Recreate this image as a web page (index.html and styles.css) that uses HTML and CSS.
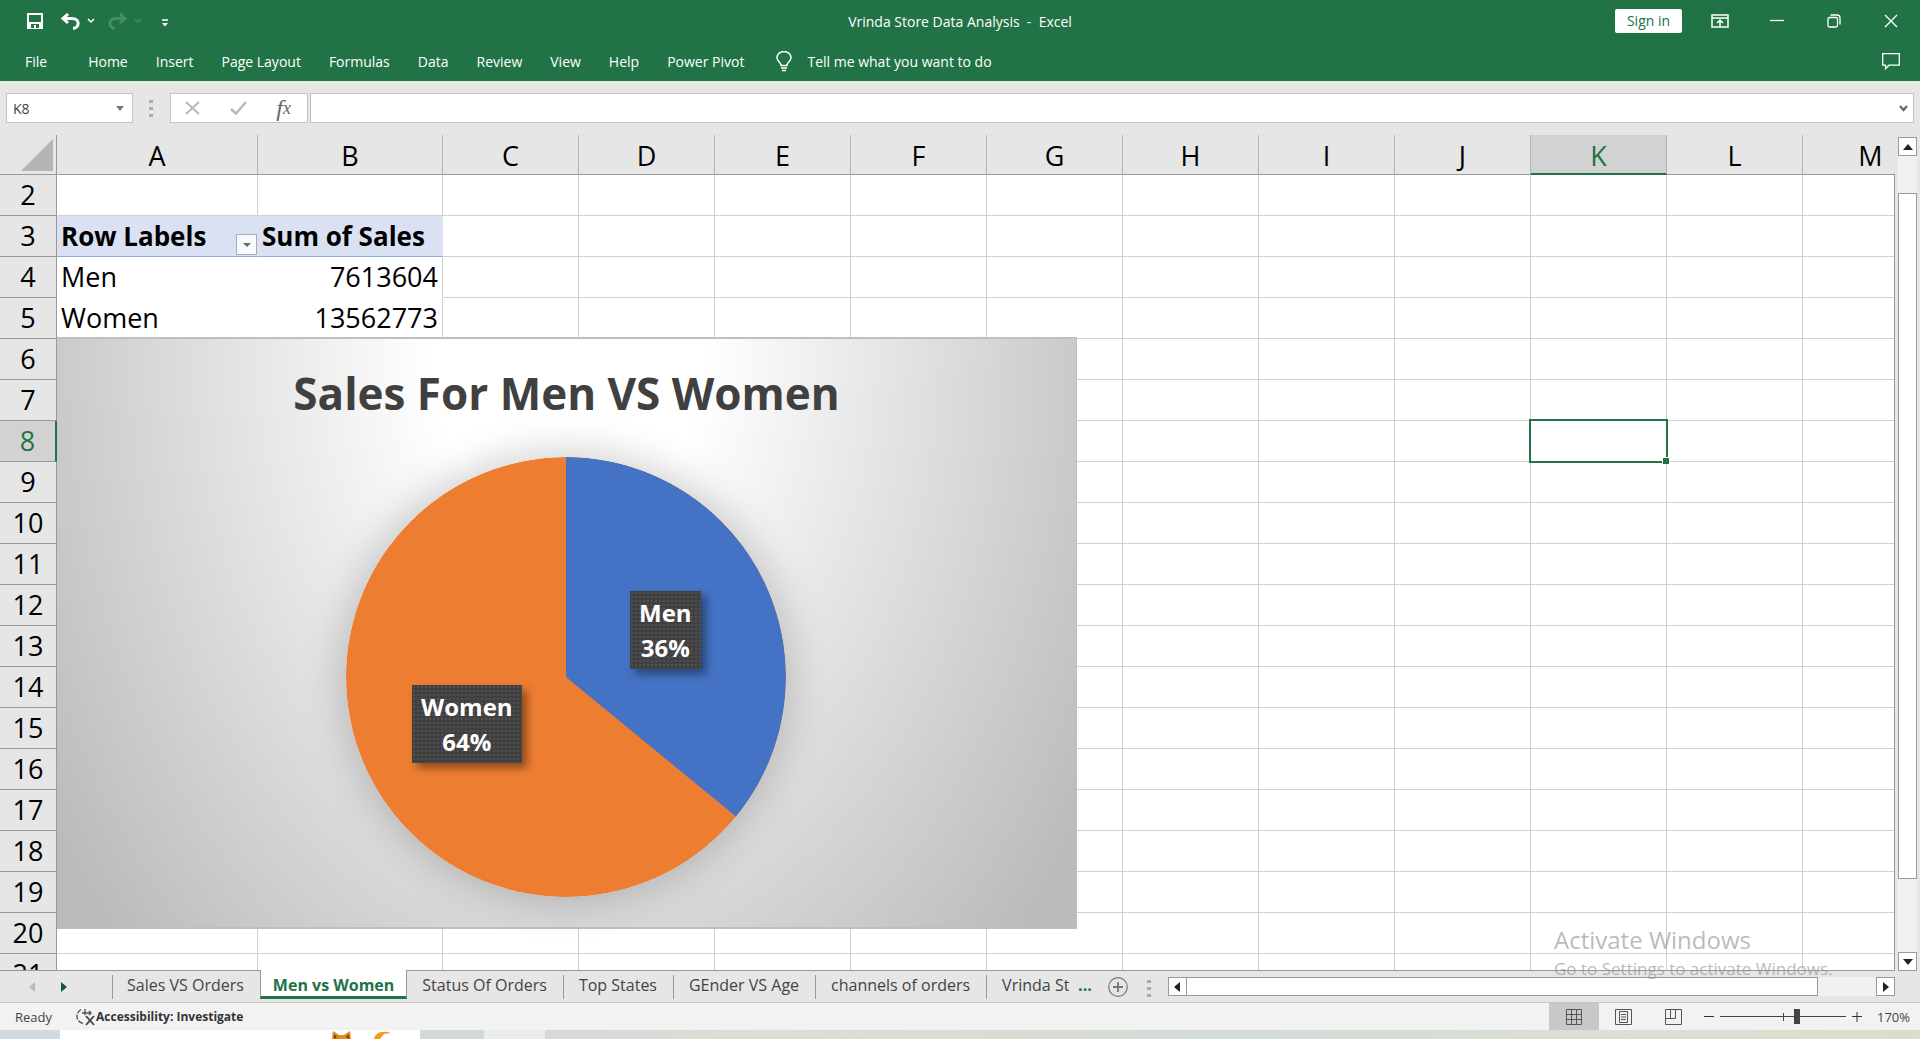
FILE: index.html
```html
<!DOCTYPE html>
<html lang="en">
<head>
<meta charset="utf-8">
<title>Vrinda Store Data Analysis - Excel</title>
<link rel="stylesheet" href="styles.css">
</head>
<body>
<div class="app">
  <header class="titlebar">
    <div class="quick">
      <button class="icon-btn" aria-label="Save"><svg width="16" height="16" viewBox="0 0 16 16"><path d="M1 1h14v14H1z" fill="none" stroke="#fff" stroke-width="2"/><path d="M1 9h14v6H1z" fill="#fff"/><path d="M4 11h8v4H9v-3H7v3H4z" fill="#217346"/></svg></button>
      <button class="icon-btn undo" aria-label="Undo"><svg width="19" height="17" viewBox="0 0 19 17"><path d="M7 1 2 5.500l5 4.500M2.500 5.500H11c8 0 8 9 1 10" fill="none" stroke="#fff" stroke-width="3"/></svg></button>
      <button class="icon-btn chev" aria-label="Undo list"><svg width="8" height="6" viewBox="0 0 8 6"><path d="m1 1 3 3 3-3" fill="none" stroke="#fff" stroke-width="1.500"/></svg></button>
      <button class="icon-btn redo" aria-label="Redo" disabled><svg width="19" height="17" viewBox="0 0 19 17"><path d="m12 1 5 4.500-5 4.500M16.500 5.500H8c-8 0-8 9-1 10" fill="none" stroke="#439064" stroke-width="3"/></svg></button>
      <button class="icon-btn chev" aria-label="Redo list" disabled><svg width="8" height="6" viewBox="0 0 8 6"><path d="m1 1 3 3 3-3" fill="none" stroke="#439064" stroke-width="1.500"/></svg></button>
      <button class="icon-btn more" aria-label="Customize toolbar"><svg width="6" height="8" viewBox="0 0 6 8"><path d="M0 1h6" stroke="#fff" stroke-width="1.500"/><path d="M0 4h6L3 7.500z" fill="#fff"/></svg></button>
    </div>
    <h1 class="doc-title">Vrinda Store Data Analysis&nbsp; -&nbsp; Excel</h1>
    <div class="window-tools">
      <button class="sign-in">Sign in</button>
      <button class="win-btn" aria-label="Ribbon display options"><svg width="18" height="14" viewBox="0 0 18 14"><path d="M1 1h16v12H1zM1 4h16" fill="none" stroke="#fff" stroke-width="1.500"/><path d="M9 12V6.500M6 9l3-3 3 3" fill="none" stroke="#fff" stroke-width="1.500"/></svg></button>
      <button class="win-btn" aria-label="Minimize"><svg width="14" height="14" viewBox="0 0 14 14"><path d="M0 6.500h14" stroke="#fff" stroke-width="1.300"/></svg></button>
      <button class="win-btn" aria-label="Restore"><svg width="14" height="14" viewBox="0 0 14 14"><rect x="1" y="3.500" width="9.500" height="9.500" rx="1.500" fill="none" stroke="#fff" stroke-width="1.300"/><path d="M3.500 1H10a3 3 0 0 1 3 3v6.500" fill="none" stroke="#fff" stroke-width="1.300"/></svg></button>
      <button class="win-btn" aria-label="Close"><svg width="14" height="14" viewBox="0 0 14 14"><path d="m1 1 12 12M13 1 1 13" stroke="#fff" stroke-width="1.400"/></svg></button>
    </div>
  </header>

  <nav class="ribbon" aria-label="Ribbon">
    <a class="file" href="#">File</a><a href="#">Home</a><a href="#">Insert</a><a href="#">Page Layout</a><a href="#">Formulas</a><a href="#">Data</a><a href="#">Review</a><a href="#">View</a><a href="#">Help</a><a href="#">Power Pivot</a>
    <a class="tell" href="#"><svg width="16" height="21" viewBox="0 0 16 21"><path d="M5 14.500c0-3-4-4-4-8a7 6 0 0 1 14 0c0 4-4 5-4 8zM5 17h6M6 19.500h4" fill="none" stroke="#fff" stroke-width="1.500"/></svg>Tell me what you want to do</a>
    <button class="icon-btn comments" aria-label="Comments"><svg width="18" height="17" viewBox="0 0 18 17"><path d="M.7.700h16.600v11.500H7L3.500 15.800v-3.600H.7z" fill="none" stroke="#fff" stroke-width="1.300"/></svg></button>
  </nav>

  <div class="formula-row">
    <div class="name-box"><input type="text" value="K8" aria-label="Name box"><svg width="8" height="5" viewBox="0 0 8 5"><path d="M0 0h8L4 5z" fill="#777"/></svg></div>
    <span class="grip"></span>
    <div class="fx-box">
      <button class="icon-btn" aria-label="Cancel"><svg width="15" height="14" viewBox="0 0 15 14"><path d="m1 1 13 12M14 1 1 13" stroke="#b9b9b9" stroke-width="2"/></svg></button>
      <button class="icon-btn" aria-label="Enter"><svg width="17" height="14" viewBox="0 0 17 14"><path d="m1 8 5 4.500L16 1" fill="none" stroke="#b9b9b9" stroke-width="2.600"/></svg></button>
      <button class="icon-btn fx" aria-label="Insert function">f<sub>x</sub></button>
    </div>
    <div class="formula"><input type="text" aria-label="Formula bar"><svg width="9" height="7" viewBox="0 0 9 7"><path d="m1 1 3.500 4L8 1" fill="none" stroke="#666" stroke-width="2.200"/></svg></div>
  </div>

  <main class="workspace">
    <div class="sheet">
      <table class="cells">
        <colgroup><col class="c-head"><col class="c-a"><col class="c-b"></colgroup>
        <thead><tr><th class="corner" aria-label="Select all"><svg width="32" height="32" viewBox="0 0 32 32"><path d="M32 0v32H0z" fill="#b4b4b4"/></svg></th></tr></thead>
        <tbody></tbody>
      </table>
      <figure class="chart">
        <figcaption>Sales For Men VS Women</figcaption>
        <svg class="pie" viewBox="0 0 440 440" role="img" aria-label="Men 36%, Women 64%">
          <circle cx="220" cy="220" r="220" fill="#ed7d31"/>
          <path d="M220 220V0A220 220 0 0 1 390 359.600z" fill="#4472c4"/>
        </svg>
        <div class="tag men">Men<br>36%</div>
        <div class="tag women">Women<br>64%</div>
      </figure>
    </div>
    <div class="edge"></div>
    <div class="scroll vertical">
      <button aria-label="Scroll up"><svg width="10" height="6" viewBox="0 0 10 6"><path d="M0 6h10L5 0z"/></svg></button>
      <i class="before"></i><i class="thumb"></i><i class="after"></i>
      <button aria-label="Scroll down"><svg width="10" height="6" viewBox="0 0 10 6"><path d="M0 0h10L5 6z"/></svg></button>
    </div>
  </main>

  <footer class="sheet-tabs">
    <div class="tab-nav">
      <button class="icon-btn" aria-label="Previous sheet"><svg width="6" height="10" viewBox="0 0 6 10"><path d="M6 0v10L0 5z" fill="#bbb"/></svg></button>
      <button class="icon-btn" aria-label="Next sheet"><svg width="6" height="10" viewBox="0 0 6 10"><path d="M0 0v10l6-5z" fill="#0e5c2f"/></svg></button>
    </div>
    <a href="#" class="first">Sales VS Orders</a><a href="#" class="active">Men vs Women</a><a href="#">Status Of Orders</a><a href="#">Top States</a><a href="#">GEnder VS Age</a><a href="#">channels of orders</a><a href="#" class="cut">Vrinda Store</a>
    <span class="dots">...</span>
    <button class="icon-btn add" aria-label="New sheet"><svg width="20" height="20" viewBox="0 0 20 20"><circle cx="10" cy="10" r="9.300" fill="none" stroke="#777" stroke-width="1.200"/><path d="M10 5v10M5 10h10" stroke="#777" stroke-width="1.800"/></svg></button>
    <span class="grip"></span>
    <div class="scroll horizontal">
      <button aria-label="Scroll left"><svg width="6" height="10" viewBox="0 0 6 10"><path d="M6 0v10L0 5z"/></svg></button>
      <i class="thumb"></i><i class="after"></i>
      <button aria-label="Scroll right"><svg width="6" height="10" viewBox="0 0 6 10"><path d="M0 0v10l6-5z"/></svg></button>
    </div>
  </footer>

  <div class="status">
    <span class="ready">Ready</span>
    <svg width="20" height="18" viewBox="0 0 20 18"><path d="M5 1.500a7.500 7.500 0 0 0 2 14" fill="none" stroke="#555" stroke-width="1.400" stroke-dasharray="5 1.500"/><path d="M9 1v6M6 5h9M13 3l2 2-2 2" fill="none" stroke="#555" stroke-width="1.400"/><path d="m10 8 8 9M18 8l-8 9" stroke="#444" stroke-width="1.800"/></svg>
    <strong>Accessibility: Investigate</strong>
    <div class="views">
      <button class="on" aria-label="Normal view"><svg width="16" height="16" viewBox="0 0 16 16"><path d="M.5.500h15v15H.5zM.5 5.500h15M.5 10.500h15M5.500.500v15M10.500.500v15" fill="none" stroke="#555"/></svg></button>
      <button aria-label="Page layout view"><svg width="17" height="16" viewBox="0 0 17 16"><path d="M.5.500h16v15H.5zM4.500 2.500h8v11h-8zM6 5.500h5M6 8h5M6 10.500h5" fill="none" stroke="#555"/></svg></button>
      <button aria-label="Page break view"><svg width="17" height="16" viewBox="0 0 17 16"><path d="M.5.500h16v15H.5zM.5 9.500h10v-9M5.500.500v9" fill="none" stroke="#555"/></svg></button>
    </div>
    <button class="icon-btn" aria-label="Zoom out"><svg width="10" height="10" viewBox="0 0 10 10"><path d="M0 4.500h10" stroke="#333"/></svg></button>
    <input class="zoom" type="range" min="10" max="400" value="250" aria-label="Zoom">
    <button class="icon-btn" aria-label="Zoom in"><svg width="10" height="10" viewBox="0 0 10 10"><path d="M0 4.500h10M5 0v10" stroke="#333"/></svg></button>
    <span class="percent">170%</span>
  </div>

  <div class="taskbar">
    <div class="search"><svg width="62" height="9" viewBox="0 0 62 9"><path d="M1 9 2 1l6 4h5l6-4 1 8z" fill="#e08a1c"/><path d="m3 4 3 3-3 2zM18 4l-3 3 3 2z" fill="#7a3c10"/><path d="M43 9c1-6 8-9 17-6l-7 1-4 5z" fill="#f0a020"/></svg></div>
    <div class="task-a"></div><div class="task-b"></div>
    <div class="wall"><span class="clock">3:58 PM</span></div>
  </div>

  <div class="watermark"><p class="wm-title">Activate Windows</p><p class="wm-text">Go to Settings to activate Windows.</p></div>
</div>
<script src="sheet.js"></script>
</body>
</html>
```
FILE: sheet.js
```js
const columns = "ABCDEFGHIJKLM".split("");
const values = {
  A3: "Row Labels", B3: "Sum of Sales",
  A4: "Men", B4: "7613604",
  A5: "Women", B5: "13562773"
};
const active = { column: "K", row: 8 };

const colgroup = document.querySelector(".cells colgroup");
columns.slice(2).forEach(() => colgroup.append(document.createElement("col")));

const headRow = document.querySelector(".cells thead tr");
columns.forEach(name => {
  const th = document.createElement("th");
  th.scope = "col";
  th.textContent = name;
  if (name === active.column) th.className = "current";
  headRow.append(th);
});

const body = document.querySelector(".cells tbody");
for (let row = 2; row <= 21; row++) {
  const tr = document.createElement("tr");
  const th = document.createElement("th");
  th.scope = "row";
  th.textContent = row;
  if (row === active.row) th.className = "current";
  tr.append(th);
  columns.forEach(name => {
    const td = document.createElement("td");
    const key = name + row;
    if (key in values) {
      td.textContent = values[key];
      td.className = row === 3 ? "pivot-head" : name === "B" ? "pivot number" : "pivot";
    }
    if (key === "A3") {
      const filter = document.createElement("button");
      filter.className = "filter";
      filter.setAttribute("aria-label", "Filter row labels");
      td.append(filter);
    }
    if (name === active.column && row === active.row) td.className = "selected";
    tr.append(td);
  });
  body.append(tr);
}
```
FILE: styles.css
```css
* { box-sizing: border-box; }
body { margin: 0; font-family: "Open Sans", "Noto Sans", sans-serif; font-size: 14px; color: #444; }
button, input { font: inherit; color: inherit; }
svg { display: block; flex: none; }
a { color: inherit; text-decoration: none; }

.app { position: relative; display: flex; flex-direction: column; height: 100vh; background: #e6e6e6; overflow: hidden; }
.icon-btn { display: flex; align-items: center; justify-content: center; padding: 0; border: 0; background: none; }

.titlebar { display: grid; grid-template-columns: 1fr auto 1fr; align-items: center; height: 42px; flex: none; background: #217346; color: #fff; }
.quick { display: flex; align-items: center; padding-left: 27px; }
.undo { margin-left: 18px; }
.chev { margin-left: 7px; }
.redo { margin-left: 13px; }
.more { margin: 4px 0 0 20px; }
.doc-title { margin: 0; font-size: 14px; font-weight: 400; }
.window-tools { display: flex; align-items: center; justify-content: flex-end; padding-right: 1px; }
.sign-in { width: 67px; height: 24px; margin-right: 9px; padding: 0; border: 0; border-radius: 2px; background: #fff; color: #217346; line-height: 20px; }
.win-btn { display: flex; align-items: center; justify-content: center; width: 57px; height: 38px; padding: 0; border: 0; background: none; }

.ribbon { display: flex; align-items: center; gap: 28px; height: 39px; flex: none; padding: 0 20px 0 25px; background: #217346; color: #fff; }
.ribbon .file { margin-right: 13px; }
.tell { display: flex; align-items: center; gap: 15px; margin-left: 4px; }
.comments { margin-left: auto; }

.formula-row { display: flex; align-items: center; height: 54px; flex: none; padding: 0 6px 4px; border-top: 4px solid #e2ebe2; }
.name-box, .fx-box, .formula { display: flex; align-items: center; height: 30px; border: 1px solid #c3c3c3; background: #fff; }
.name-box { width: 127px; padding-right: 8px; }
.name-box input { flex: 1; min-width: 0; padding: 0 6px; border: 0; background: none; }
.grip { width: 4px; height: 17px; margin: 0 17px 0 16px; background: repeating-linear-gradient(#aaa 0 3px, transparent 3px 7px); }
.fx-box { justify-content: space-between; width: 138px; padding: 0 16px 0 14px; }
.fx { font: italic 400 24px/24px "Liberation Serif", serif; color: #666; }
.fx sub { font-size: 18px; line-height: 12px; }
.formula { flex: 1; margin-left: 2px; padding-right: 5px; }
.formula input { flex: 1; border: 0; background: none; }

.workspace { display: flex; flex: 1; min-height: 0; }
.sheet { position: relative; flex: 1; min-width: 0; overflow: hidden; border-bottom: 1px solid #999; }
.cells { width: 1939px; table-layout: fixed; border-collapse: separate; border-spacing: 0; background: #fff; color: #000; font-size: 27px; line-height: 32px; }
.cells col { width: 136px; }
.cells .c-head { width: 57px; }
.cells .c-a { width: 201px; }
.cells .c-b { width: 185px; }
.cells th { padding: 0; border: 0 solid #999; border-width: 0 1px 1px 0; background: #e6e6e6; font-weight: 400; text-align: center; }
.cells thead th { height: 40px; padding-top: 3px; border-right-color: #b4b4b4; }
.cells thead th.corner { padding: 0 4px 3px 21px; border-right-color: #999; vertical-align: bottom; }
.cells thead th.current { border-bottom: 2px solid #217346; background: #d2d2d2; color: #217346; }
.cells tbody th.current { border-right: 2px solid #217346; background: #d2d2d2; color: #217346; }
.cells td { height: 41px; padding: 0 4px; border: 0 solid #d0d0d0; border-width: 0 1px 1px 0; white-space: nowrap; }
.cells .pivot-head { position: relative; border-color: #d9e1f2; border-bottom-color: #8ea9db; background: #d9e1f2; font-size: 26px; font-weight: 700; }
.cells .pivot { border-color: #fff; }
.cells .number { border-right-color: #d0d0d0; text-align: right; }
.cells .selected { position: relative; }
.selected::before { content: ""; position: absolute; inset: -2px; border: 2px solid #217346; }
.selected::after { content: ""; position: absolute; right: -3px; bottom: -3px; width: 6px; height: 6px; border: solid #fff; border-width: 1px 0 0 1px; background: #217346; }
.filter { position: absolute; right: 0; bottom: 1px; width: 21px; height: 21px; padding: 0; border: 1px solid #a5adbb; background: #f8fafd; }
.filter::after { content: ""; position: absolute; left: 6px; top: 8px; border: 4px solid transparent; border-top-color: #666; border-bottom: 0; }

.chart { position: absolute; left: 57px; top: 202px; width: 1020px; height: 592px; margin: 0; border: solid #bfbfbf; border-width: 2px 1px 2px 0; background: radial-gradient(ellipse 61% 150% at 50% 0, #fff 0, #fff 22%, #bababa 100%); font-weight: 700; text-align: center; }
.chart figcaption { padding-top: 26px; color: #404040; font-size: 44px; line-height: 56px; }
.pie { position: absolute; left: 289px; top: 118px; width: 440px; height: 440px; border-radius: 50%; box-shadow: 0 0 40px 4px rgba(0, 0, 0, .2); }
.tag { position: absolute; padding: 4px 9px; background: radial-gradient(#505050 1px, transparent 1px) 0 0 / 4px 4px #404040; color: #fff; font-size: 24px; line-height: 35px; box-shadow: 5px 5px 8px rgba(0, 0, 0, .4); }
.men { left: 573px; top: 252px; }
.women { left: 355px; top: 346px; }

.edge { width: 1px; margin-top: 39px; background: #999; }
.scroll { display: flex; background: #f1f1f1; }
.scroll button { display: flex; align-items: center; justify-content: center; width: 19px; height: 19px; flex: none; padding: 0; border: 1px solid #999; background: #fff; fill: #222; }
.vertical { flex-direction: column; width: 19px; margin: 2px 3px 0; }
.vertical .before { flex: 37; }
.vertical .thumb { flex: 688; border: 1px solid #999; background: #fff; }
.vertical .after { flex: 73; }

.sheet-tabs { display: flex; align-items: flex-start; height: 32px; flex: none; padding-right: 25px; border-bottom: 1px solid #c6c6c6; font-size: 16px; line-height: 20px; }
.tab-nav { display: flex; gap: 26px; width: 112px; padding: 11px 0 0 29px; }
.sheet-tabs a { position: relative; height: 24px; margin-top: 4px; padding: 0 16px 0 15px; border-right: 1px solid #999; white-space: nowrap; overflow: hidden; }
.sheet-tabs .first { padding-left: 14px; border-left: 1px solid #999; border-right: 0; }
.sheet-tabs .active { height: 29px; margin-top: -1px; padding: 5px 12px 0; border: 1px solid #999; border-width: 0 1px 3px; border-bottom-color: #217346; background: #fff; color: #217346; font-weight: 700; }
.sheet-tabs .cut { width: 82px; padding-right: 0; border: 0; }
.dots { padding: 4px 0 0 9px; color: #217346; font-weight: 700; }
.add { margin: 6px 0 0 16px; }
.sheet-tabs .grip { margin: 9px 17px 0 19px; }
.horizontal { flex: 1; margin-top: 6px; }
.horizontal .thumb { flex: 628; margin-left: -1px; border: 1px solid #999; background: #fff; }
.horizontal .after { flex: 58; }

.status { display: flex; align-items: center; height: 27px; flex: none; padding: 0 10px 0 15px; background: #f2f2f2; font-size: 13px; }
.ready { margin-right: 24px; }
.status strong { color: #333; font-size: 12px; }
.views { display: flex; align-self: stretch; margin: 0 5px 0 auto; }
.views button { display: flex; align-items: center; justify-content: center; width: 50px; padding: 0; border: 0; background: none; }
.views .on { background: #c8c8c8; }
.zoom { appearance: none; width: 126px; height: 17px; margin: 0 6px; background: linear-gradient(#444, #444) 63px 5px / 1px 8px no-repeat, linear-gradient(#444, #444) 0 8px / 100% 1px no-repeat; }
.zoom::-webkit-slider-thumb { appearance: none; width: 6px; height: 15px; background: #444; }
.percent { margin-left: 15px; }

.taskbar { display: flex; height: 9px; flex: none; padding-left: 60px; background: #cfdae3; overflow: hidden; }
.search { width: 360px; padding-left: 271px; background: #fff; }
.task-a { width: 64px; background: #d3d8da; }
.task-b { width: 61px; background: #eaedee; }
.wall { flex: 1; padding: 5px 80px 0 0; background: linear-gradient(90deg, #d6d9da, #deded2 16%, #d3dcd6 50%, #dbe0d4 80%, #dedccc); text-align: right; }
.clock { color: #222; font-size: 13px; line-height: 14px; }

.watermark { position: absolute; right: 81px; bottom: 57px; width: 285px; color: rgba(140, 140, 140, .6); }
.watermark p { margin: 0; white-space: nowrap; }
.wm-title { font-size: 24px; line-height: 32px; }
.wm-text { font-size: 17px; line-height: 26px; }
```
